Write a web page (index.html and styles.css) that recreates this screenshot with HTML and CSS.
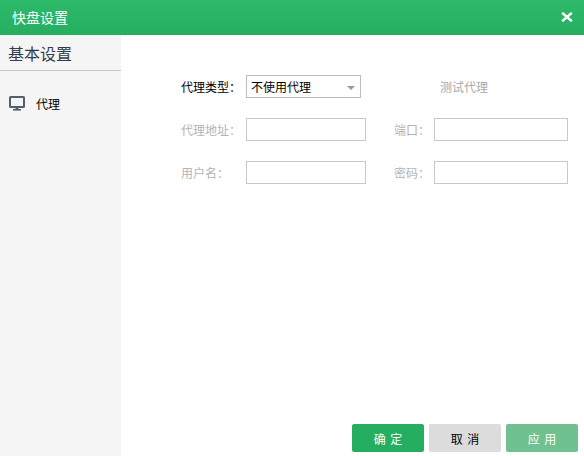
FILE: index.html
```html
<!DOCTYPE html>
<html lang="zh-CN">
  <head>
    <meta charset="UTF-8" />
    <title>快盘设置</title>
    <link rel="stylesheet" href="styles.css">
  </head>

  <body>
    <div class="titlebar">
      <span class="title">快盘设置</span>
      <svg class="close" width="12" height="10" viewBox="0 0 12 10">
        <path d="M1.2 0.8 L10.8 9.2 M10.8 0.8 L1.2 9.2" stroke="#fff" stroke-width="2.4" fill="none" />
      </svg>
    </div>

    <div class="content">
      <aside class="sidebar">
        <div class="sidebar-title">基本设置</div>
        <div class="nav-item">
          <svg width="16" height="15" viewBox="0 0 16 15">
            <rect x="1" y="1" width="14" height="10" rx="0.5" fill="none" stroke="#565e73" stroke-width="2" />
            <path d="M4 13.8 H12" stroke="#565e73" stroke-width="1.6" />
            <path d="M6.5 11 H9.5 V13 H6.5 Z" fill="#565e73" />
          </svg>
          <span>代理</span>
        </div>
      </aside>

      <main class="panel">
        <div class="form">
          <label class="active">代理类型：</label>
          <div class="select">
            <span>不使用代理</span>
            <i class="caret"></i>
          </div>
          <span class="test-link">测试代理</span>

          <label>代理地址：</label>
          <div class="input"></div>
          <span class="gap"></span>
          <label>端口：</label>
          <div class="input"></div>

          <label>用户名：</label>
          <div class="input"></div>
          <span class="gap"></span>
          <label>密码：</label>
          <div class="input"></div>
        </div>

        <div class="actions">
          <button class="btn primary">确 定</button>
          <button class="btn cancel">取 消</button>
          <button class="btn apply">应 用</button>
        </div>
      </main>
    </div>
  </body>
</html>
```

FILE: styles.css
```css
html,
body {
  height: 100%;
}

body {
  margin: 0;
  display: flex;
  flex-direction: column;
  background-color: #fff;
  color: #000;
  font-family: "Noto Sans CJK SC", "Liberation Sans", sans-serif;
  font-size: 12px;
}

.titlebar {
  height: 35px;
  flex: none;
  box-sizing: border-box;
  padding: 0 11px 0 12px;
  display: flex;
  align-items: center;
  justify-content: space-between;
  background: linear-gradient(#2dbb6b, #27ae60);
  border-bottom: 1px solid #2aa862;
  color: #fff;
  font-size: 14px;
}

.content {
  flex: 1;
  display: flex;
  min-height: 0;
}

.sidebar {
  width: 121px;
  flex: none;
  background-color: #f5f5f5;
}

.sidebar-title {
  height: 35px;
  line-height: 37px;
  padding-left: 8px;
  border-bottom: 1px solid #c8c8c8;
  color: #333c4a;
  font-size: 16px;
}

.nav-item {
  display: flex;
  align-items: center;
  gap: 11px;
  padding: 24px 0 0 9px;
}

.panel {
  flex: 1;
  display: flex;
  flex-direction: column;
}

.form {
  padding: 40px 0 0 60px;
  display: grid;
  grid-template-columns: 65px 120px 28px 40px 134px;
  grid-auto-rows: 23px;
  row-gap: 20px;
  align-items: center;
}

label {
  color: #b4b4b4;
}

label.active {
  color: #000;
}

.select,
.input {
  box-sizing: border-box;
  height: 23px;
  border: 1px solid #c8c8c8;
  background-color: #fff;
}

.select {
  width: 115px;
  display: flex;
  align-items: center;
  justify-content: space-between;
  padding: 0 5px 0 4px;
  border-color: #bdbdbd;
}

.caret {
  width: 0;
  height: 0;
  margin-top: 3px;
  border-left: 4px solid transparent;
  border-right: 4px solid transparent;
  border-top: 4px solid #999;
}

.test-link {
  grid-column: 3 / 6;
  padding-left: 74px;
  color: #a8a8a8;
}

.actions {
  margin-top: auto;
  padding: 0 6px 4px 0;
  display: flex;
  justify-content: flex-end;
  gap: 5px;
}

.btn {
  width: 72px;
  height: 28px;
  padding: 0;
  border: none;
  border-radius: 2px;
  font-family: inherit;
  font-size: 12px;
  word-spacing: 2px;
}

.primary {
  background-color: #25ae60;
  color: #fff;
}

.cancel {
  background-color: #dcdcdc;
  color: #000;
}

.apply {
  background-color: #6fc190;
  color: #fff;
}
```
